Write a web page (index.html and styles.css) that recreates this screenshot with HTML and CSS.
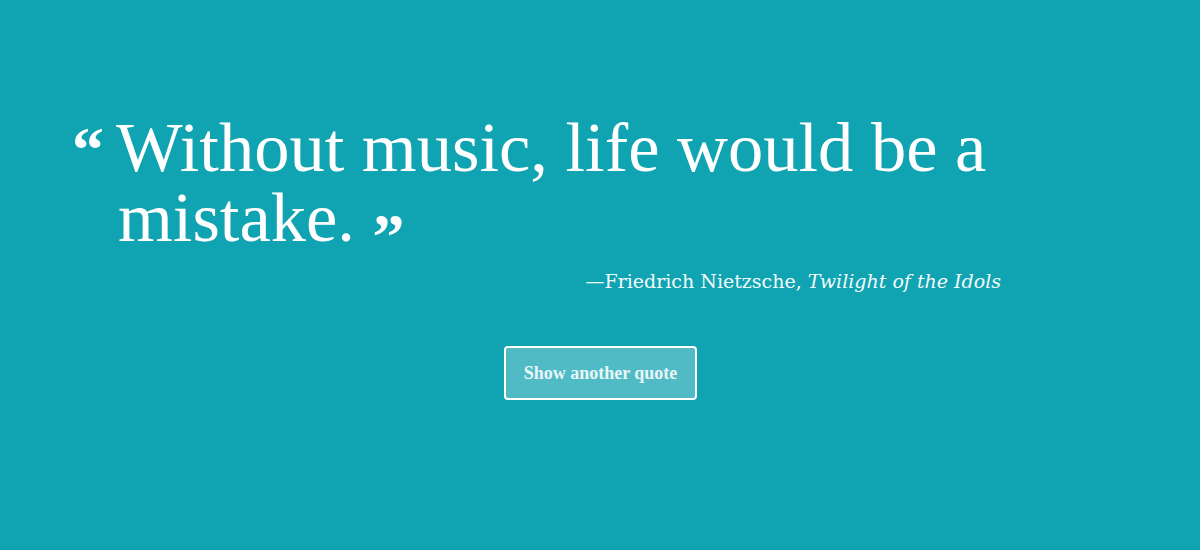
FILE: index.html
```html
<!DOCTYPE html>
<html lang="en">
<head>
<meta charset="utf-8">
<title>Random Quote</title>
<link rel="stylesheet" href="styles.css">
</head>
<body>
<main class="quote-box">
  <blockquote class="quote">
    <p class="quote-text"><span class="mark mark-open">“</span>Without music, life would be a mistake. <span class="mark mark-close">”</span></p>
  </blockquote>
  <p class="attribution">—Friedrich Nietzsche, <cite class="source">Twilight of the Idols</cite></p>
  <div class="actions">
    <button class="btn" type="button">Show another quote</button>
  </div>
</main>
</body>
</html>
```

FILE: styles.css
```css
html, body {
  margin: 0;
  padding: 0;
}

body {
  background: #10a3b2;
  color: #ffffff;
  height: 550px;
  overflow: hidden;
}

.quote-box {
  padding-top: 112px;
}

.quote {
  margin: 0 0 0 118px;
  width: 883px;
}

.quote-text {
  margin: 0;
  font-family: "Liberation Serif", "Times New Roman", serif;
  font-size: 70.5px;
  line-height: 70px;
  font-weight: normal;
}

.mark {
  font-size: 64px;
  font-weight: bold;
  line-height: 0;
}

.mark-open {
  margin-left: -46px;
  margin-right: 12px;
}

.mark-close {
  vertical-align: -17px;
}

.attribution {
  margin: 16px 0 0 118px;
  width: 883px;
  text-align: right;
  font-family: "DejaVu Serif", serif;
  font-size: 19px;
  line-height: 27px;
  color: #f4fbfc;
}

.source {
  font-style: italic;
}

.actions {
  display: flex;
  justify-content: center;
  margin-top: 51px;
  padding-left: 1px;
}

.btn {
  font-family: "Liberation Serif", "Times New Roman", serif;
  font-size: 18px;
  line-height: 20px;
  font-weight: bold;
  color: #e8f6f8;
  background: #51bbc5;
  border: 2px solid #ffffff;
  border-radius: 4px;
  padding: 15px 18px;
  cursor: pointer;
}
```
